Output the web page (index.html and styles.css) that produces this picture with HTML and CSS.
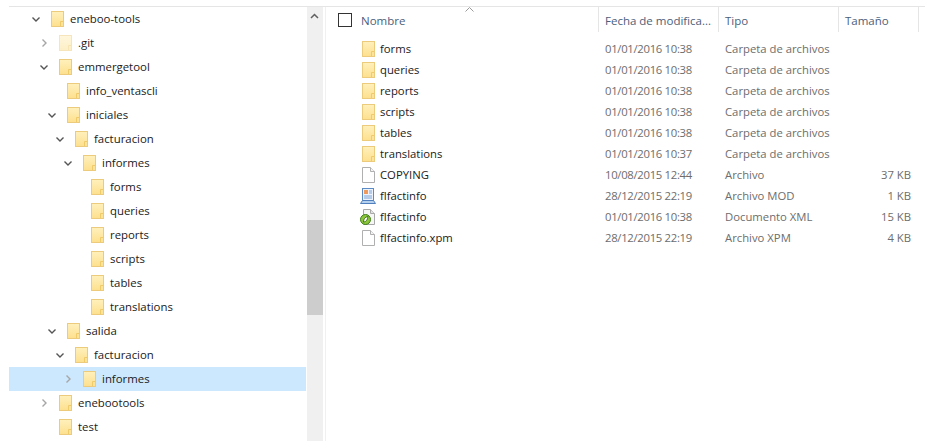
FILE: index.html
```html
<!DOCTYPE html>
<html lang="es">
<head>
    <meta charset="UTF-8">
    <title>eneboo-tools</title>
    <link rel="stylesheet" href="styles.css">
</head>
<body>
    <svg class="defs" width="0" height="0" xmlns="http://www.w3.org/2000/svg">
        <defs>
            <linearGradient id="folderFill" x1="0" y1="0" x2="0" y2="1">
                <stop offset="0" stop-color="#fff0bc"/>
                <stop offset="1" stop-color="#fde08e"/>
            </linearGradient>
            <symbol id="folder" viewBox="0 0 13 16">
                <rect x="0.5" y="0.5" width="12" height="15" fill="url(#folderFill)" stroke="#eccb7c"/>
                <path d="M9.5 15V10.5H12" fill="none" stroke="#efcb6a"/>
                <rect x="10" y="11" width="2" height="4" fill="#fbe39a"/>
            </symbol>
            <symbol id="page" viewBox="0 0 13 16">
                <path d="M0.5 0.5H8.5L12.5 4.5V15.5H0.5Z" fill="#fff" stroke="#b0b0b0"/>
                <path d="M8.5 0.5V4.5H12.5" fill="#f4f4f4" stroke="#b0b0b0"/>
            </symbol>
            <symbol id="chev-down" viewBox="0 0 8 5">
                <path d="M0.5 0.5L4 4L7.5 0.5" fill="none" stroke="#555" stroke-width="1.4"/>
            </symbol>
            <symbol id="chev-right" viewBox="0 0 5 8">
                <path d="M0.5 0.5L4 4L0.5 7.5" fill="none" stroke="#a6a6a6" stroke-width="1.4"/>
            </symbol>
        </defs>
    </svg>

    <div class="window">
        <div class="tree">
            <div class="tree-row level-0"><span class="toggle"><svg class="chev-d"><use href="#chev-down"/></svg></span><svg class="icon"><use href="#folder"/></svg><span class="label">eneboo-tools</span></div>
            <div class="tree-row level-1"><span class="toggle"><svg class="chev-r"><use href="#chev-right"/></svg></span><svg class="icon hidden-dir"><use href="#folder"/></svg><span class="label">.git</span></div>
            <div class="tree-row level-1"><span class="toggle"><svg class="chev-d"><use href="#chev-down"/></svg></span><svg class="icon"><use href="#folder"/></svg><span class="label">emmergetool</span></div>
            <div class="tree-row level-2"><span class="toggle"></span><svg class="icon"><use href="#folder"/></svg><span class="label">info_ventascli</span></div>
            <div class="tree-row level-2"><span class="toggle"><svg class="chev-d"><use href="#chev-down"/></svg></span><svg class="icon"><use href="#folder"/></svg><span class="label">iniciales</span></div>
            <div class="tree-row level-3"><span class="toggle"><svg class="chev-d"><use href="#chev-down"/></svg></span><svg class="icon"><use href="#folder"/></svg><span class="label">facturacion</span></div>
            <div class="tree-row level-4"><span class="toggle"><svg class="chev-d"><use href="#chev-down"/></svg></span><svg class="icon"><use href="#folder"/></svg><span class="label">informes</span></div>
            <div class="tree-row level-5"><span class="toggle"></span><svg class="icon"><use href="#folder"/></svg><span class="label">forms</span></div>
            <div class="tree-row level-5"><span class="toggle"></span><svg class="icon"><use href="#folder"/></svg><span class="label">queries</span></div>
            <div class="tree-row level-5"><span class="toggle"></span><svg class="icon"><use href="#folder"/></svg><span class="label">reports</span></div>
            <div class="tree-row level-5"><span class="toggle"></span><svg class="icon"><use href="#folder"/></svg><span class="label">scripts</span></div>
            <div class="tree-row level-5"><span class="toggle"></span><svg class="icon"><use href="#folder"/></svg><span class="label">tables</span></div>
            <div class="tree-row level-5"><span class="toggle"></span><svg class="icon"><use href="#folder"/></svg><span class="label">translations</span></div>
            <div class="tree-row level-2"><span class="toggle"><svg class="chev-d"><use href="#chev-down"/></svg></span><svg class="icon"><use href="#folder"/></svg><span class="label">salida</span></div>
            <div class="tree-row level-3"><span class="toggle"><svg class="chev-d"><use href="#chev-down"/></svg></span><svg class="icon"><use href="#folder"/></svg><span class="label">facturacion</span></div>
            <div class="tree-row level-4 selected"><span class="toggle"><svg class="chev-r"><use href="#chev-right"/></svg></span><svg class="icon"><use href="#folder"/></svg><span class="label">informes</span></div>
            <div class="tree-row level-1"><span class="toggle"><svg class="chev-r"><use href="#chev-right"/></svg></span><svg class="icon"><use href="#folder"/></svg><span class="label">enebootools</span></div>
            <div class="tree-row level-1"><span class="toggle"></span><svg class="icon"><use href="#folder"/></svg><span class="label">test</span></div>
        </div>

        <div class="scrollbar">
            <svg class="scroll-up" width="9" height="6" viewBox="0 0 9 6"><path d="M1 5L4.5 1.5L8 5" fill="none" stroke="#606060" stroke-width="1.5"/></svg>
            <div class="scroll-thumb"></div>
        </div>

        <div class="files">
            <div class="file-head">
                <div class="col-name">
                    <span class="checkbox"></span>
                    <span>Nombre</span>
                    <svg class="sort-arrow" width="9" height="5" viewBox="0 0 9 5"><path d="M0.5 4.5L4.5 0.5L8.5 4.5" fill="none" stroke="#9a9a9a"/></svg>
                </div>
                <div class="col-date">Fecha de modifica...</div>
                <div class="col-type">Tipo</div>
                <div class="col-size">Tamaño</div>
            </div>
            <div class="file-list">
                <div class="file-row"><div class="col-name"><svg class="icon"><use href="#folder"/></svg><span>forms</span></div><div class="col-date">01/01/2016 10:38</div><div class="col-type">Carpeta de archivos</div><div class="col-size"></div></div>
                <div class="file-row"><div class="col-name"><svg class="icon"><use href="#folder"/></svg><span>queries</span></div><div class="col-date">01/01/2016 10:38</div><div class="col-type">Carpeta de archivos</div><div class="col-size"></div></div>
                <div class="file-row"><div class="col-name"><svg class="icon"><use href="#folder"/></svg><span>reports</span></div><div class="col-date">01/01/2016 10:38</div><div class="col-type">Carpeta de archivos</div><div class="col-size"></div></div>
                <div class="file-row"><div class="col-name"><svg class="icon"><use href="#folder"/></svg><span>scripts</span></div><div class="col-date">01/01/2016 10:38</div><div class="col-type">Carpeta de archivos</div><div class="col-size"></div></div>
                <div class="file-row"><div class="col-name"><svg class="icon"><use href="#folder"/></svg><span>tables</span></div><div class="col-date">01/01/2016 10:38</div><div class="col-type">Carpeta de archivos</div><div class="col-size"></div></div>
                <div class="file-row"><div class="col-name"><svg class="icon"><use href="#folder"/></svg><span>translations</span></div><div class="col-date">01/01/2016 10:37</div><div class="col-type">Carpeta de archivos</div><div class="col-size"></div></div>
                <div class="file-row"><div class="col-name"><svg class="icon"><use href="#page"/></svg><span>COPYING</span></div><div class="col-date">10/08/2015 12:44</div><div class="col-type">Archivo</div><div class="col-size">37 KB</div></div>
                <div class="file-row"><div class="col-name">
                    <svg class="icon wide" viewBox="0 0 16 16">
                        <rect x="2.5" y="0.5" width="11" height="12" fill="#eef3fb" stroke="#5b8ac4"/>
                        <rect x="4" y="2" width="4" height="4" fill="#ee9a5c"/>
                        <path d="M9 3H12M9 5H12M4 8H12M4 10H12" stroke="#7ba3d6"/>
                        <path d="M0.5 15.5L2.5 12.5H13.5L15.5 15.5Z" fill="#b5cfee" stroke="#4f7fbc"/>
                    </svg><span>flfactinfo</span></div><div class="col-date">28/12/2015 22:19</div><div class="col-type">Archivo MOD</div><div class="col-size">1 KB</div></div>
                <div class="file-row"><div class="col-name">
                    <svg class="icon wide" viewBox="0 0 16 16">
                        <path d="M3.5 0.5H10.5L14.5 4.5V15.5H3.5Z" fill="#f6f6f6" stroke="#a8a8a8"/>
                        <path d="M10.5 0.5V4.5H14.5" fill="#e2e2e2" stroke="#a8a8a8"/>
                        <circle cx="5.5" cy="10.5" r="5" fill="#8cc63a" stroke="#3f7d18"/>
                        <path d="M8 7.5C5 8 3.5 10 3.5 13C6 13 7.5 11 8 7.5Z" fill="#fff" stroke="#2f5f10" stroke-width="0.8"/>
                    </svg><span>flfactinfo</span></div><div class="col-date">01/01/2016 10:38</div><div class="col-type">Documento XML</div><div class="col-size">15 KB</div></div>
                <div class="file-row"><div class="col-name"><svg class="icon"><use href="#page"/></svg><span>flfactinfo.xpm</span></div><div class="col-date">28/12/2015 22:19</div><div class="col-type">Archivo XPM</div><div class="col-size">4 KB</div></div>
            </div>
        </div>
    </div>
</body>
</html>
```

FILE: styles.css
```css
* {
    box-sizing: border-box;
}
html, body {
    height: 100%;
}
body {
    margin: 0;
    overflow: hidden;
    padding-top: 6px;
    background-color: #fff;
    font-family: "Open Sans", "Noto Sans", Arial, sans-serif;
    font-size: 11.5px;
    color: #1a1a1a;
}
.defs {
    display: block;
    height: 0;
}
.window {
    display: flex;
    height: 435px;
    margin-left: 9px;
    border-top: 1px solid #e5e5e5;
}

/* Left tree */
.tree {
    width: 297px;
    margin-right: 1px;
    flex-shrink: 0;
}
.tree-row {
    display: flex;
    align-items: center;
    height: 24px;
    font-size: 11.4px;
}
.tree-row .icon {
    margin-right: 6px;
}
.tree-row .label {
    padding-bottom: 2px;
}
.tree-row.selected {
    background-color: #cce8ff;
}
.toggle {
    display: flex;
    align-items: center;
    justify-content: center;
    width: 16px;
    height: 16px;
    margin-right: 7px;
}
.level-0 { padding-left: 19px; }
.level-1 { padding-left: 27px; }
.level-2 { padding-left: 35px; }
.level-3 { padding-left: 43px; }
.level-4 { padding-left: 51px; }
.level-5 { padding-left: 59px; }
.chev-d {
    width: 8px;
    height: 5px;
}
.chev-r {
    width: 5px;
    height: 8px;
}
.icon {
    width: 13px;
    height: 16px;
    flex-shrink: 0;
}
.hidden-dir {
    opacity: 0.5;
}

/* Scrollbar */
.scrollbar {
    display: flex;
    flex-direction: column;
    width: 16px;
    flex-shrink: 0;
    background-color: #f0f0f0;
}
.scroll-up {
    flex-shrink: 0;
    margin: 6px 0 201px 3px;
}
.scroll-thumb {
    height: 95px;
    background-color: #cdcdcd;
}

/* Right file list */
.files {
    flex: 1;
    margin-left: 2px;
    border-left: 1px solid #f0f0f0;
}
.file-head {
    display: flex;
    height: 25px;
    color: #4c607a;
}
.file-head > div {
    display: flex;
    align-items: center;
    border-right: 1px solid #e5e5e5;
    padding-top: 1px;
}
.col-name {
    display: flex;
    align-items: center;
    width: 273px;
    padding-left: 36px;
}
.file-head .col-name {
    position: relative;
    padding-left: 12px;
}
.checkbox {
    width: 14px;
    height: 14px;
    margin-right: 9px;
    border: 1px solid #333;
}
.sort-arrow {
    position: absolute;
    top: 0;
    left: 139px;
}
.col-date {
    width: 120px;
    padding-left: 6px;
}
.col-type {
    width: 120px;
    padding-left: 6px;
}
.col-size {
    width: 80px;
    padding-left: 6px;
}
.file-list {
    padding-top: 6px;
}
.file-row {
    display: flex;
    align-items: center;
    height: 21px;
    color: #6d6d6d;
    font-size: 11.3px;
}
.file-row .col-name {
    color: #1a1a1a;
}
.file-row .col-date {
    letter-spacing: -0.3px;
}
.file-row .icon {
    margin-right: 5px;
}
.file-row .icon.wide {
    width: 16px;
    margin-left: -2px;
    margin-right: 4px;
}
.file-row .col-size {
    padding-right: 8px;
    text-align: right;
}
```
